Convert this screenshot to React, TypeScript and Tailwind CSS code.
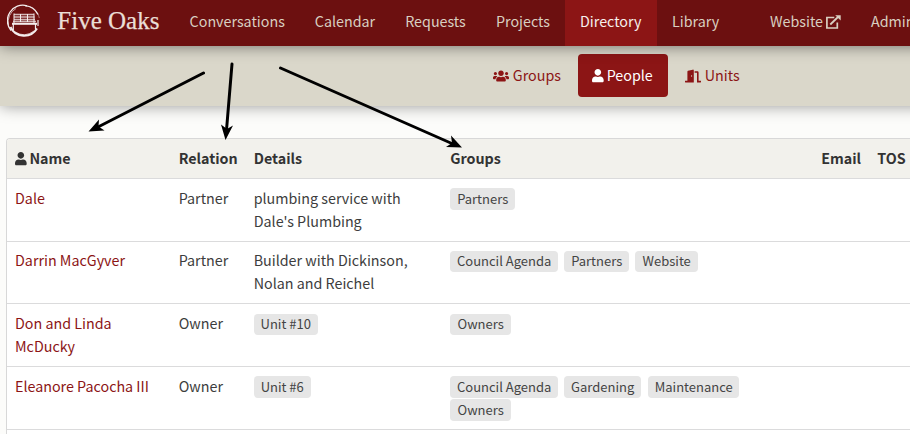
import type { ReactNode } from "react";
import { FaUser, FaUsers, FaDoorOpen } from "react-icons/fa";

function Logo() {
  return (
    <svg width="34" height="34" viewBox="0 0 34 34" fill="none" stroke="#f4eeee">
      <path d="M4 26.500A15.400 15.400 0 0 1 20 1.800" strokeWidth="1.300" />
      <path d="M1.500 21A15.500 15.500 0 0 1 9 4.500" strokeWidth=".8" opacity=".8" />
      <path d="M3.500 23A15 15 0 0 0 30 24.500" strokeWidth="2" />
      <path d="M8 28Q18 34 27 27" strokeWidth="1" opacity=".8" />
      <path d="M18 1.700Q27 2.500 31 10.500" strokeWidth="1.300" />
      <path d="M23 2.500Q31 6 32.300 14" strokeWidth=".6" opacity=".7" />
      <path d="M7 10.500H27M7 13H27.500M7 15.500H28M6 17.500H29" strokeWidth="1.500" opacity=".75" />
      <path d="M7 9.500V19M13.500 10V18M20.500 10V18M27 9.500V19" strokeWidth="1" />
      <path d="M5 19.800H30" strokeWidth="2" />
      <path d="M6.300 20V26M28.500 20V25M31 16V22" strokeWidth="1.200" />
    </svg>
  );
}

function ExternalIcon() {
  return (
    <svg className="ml-[3px] mt-[3px] shrink-0" width="15" height="14" viewBox="0 0 15 14" fill="none" stroke="currentColor">
      <path d="M8.300 2.500H.9V13H11.300V7.500" strokeWidth="1.700" />
      <path d="M4.300 9.500L12 2" strokeWidth="1.800" />
      <path d="M9.200.2H14.700V5.500Z" fill="currentColor" stroke="none" />
    </svg>
  );
}

function NavItem({ children, width, active = false }: { children: ReactNode; width: string; active?: boolean }) {
  return (
    <a className={`h-[46px] shrink-0 pl-[15px] pt-[9px] ${width} ${active ? "bg-[#8c1515] text-[#f6f0ec]" : "text-[#d9cfc0]"}`}>
      <span className="flex items-center leading-[23px]">{children}</span>
    </a>
  );
}

function Tag({ children, width, short = false }: { children: ReactNode; width: string; short?: boolean }) {
  return (
    <span className={`flex items-center justify-center rounded-[4px] bg-[#e6e6e6] text-[13px] leading-[23px] text-[#444] ${short ? "h-[21px] pb-[2px]" : "h-[22px] pb-px"} ${width}`}>
      {children}
    </span>
  );
}

const cols = "grid grid-cols-[163.700px_75px_196.500px_371px_56px_60px] pl-2";

function Row({ height, name, relation, details, groups }: { height: string; name: ReactNode; relation: string; details: ReactNode; groups: ReactNode }) {
  return (
    <div className={`${cols} ${height} border-b border-[#dbdbdc] leading-[23px]`}>
      <div className="text-[#8c1515]">{name}</div>
      <div>{relation}</div>
      <div>{details}</div>
      <div>{groups}</div>
    </div>
  );
}

export default function App() {
  return (
    <div className="h-[434px] w-[910px] overflow-hidden whitespace-nowrap bg-[#fcfcfa] font-['Noto_Sans_CJK_SC',sans-serif] text-[14.3px] text-[#3d3d3d]">
      <div className="relative flex h-[434px] flex-col">
        <header className="relative z-20 flex h-[46px] w-[960px] shrink-0 bg-[#6c1010] shadow-[0_0_15px_rgba(0,0,0,0.5)]">
          <div className="flex w-[174.600px] shrink-0 pl-[7px] pt-1">
            <Logo />
            <span className="ml-[16.300px] pt-[2.400px] font-['Liberation_Serif',serif] text-[25px] leading-[30px] text-[#eadfd6] [-webkit-text-stroke:0.25px]">Five Oaks</span>
          </div>
          <NavItem width="w-[125.200px]">Conversations</NavItem>
          <NavItem width="w-[90.400px]">Calendar</NavItem>
          <NavItem width="w-[90.800px]">Requests</NavItem>
          <NavItem width="w-[84px]">Projects</NavItem>
          <NavItem width="w-[92px]" active>Directory</NavItem>
          <NavItem width="w-[98px]">Library</NavItem>
          <NavItem width="w-[101px]">Website<ExternalIcon /></NavItem>
          <NavItem width="w-[80px]">Admin</NavItem>
        </header>

        <nav className="relative z-10 flex h-[60px] w-[960px] shrink-0 bg-[#dad7ca] pl-[493px] pt-2 leading-[23px] text-[#8c1515] shadow-[0_0_15px_rgba(0,0,0,0.4)]">
          <a className="h-[43px] w-[85px] pt-[9px]"><span className="flex h-[23px] items-center"><FaUsers className="mr-[3.800px] mt-[3px] h-4 w-4" />Groups</span></a>
          <a className="h-[43px] w-[90px] rounded bg-[#8c1515] pl-[14px] pt-[9px] text-white"><span className="flex h-[23px] items-center"><FaUser className="mr-[3px] mt-[3px] h-[13.300px] w-[11.700px]" />People</span></a>
          <a className="h-[43px] pl-[17.300px] pt-[9px]"><span className="flex h-[23px] items-center"><FaDoorOpen className="mr-[3.400px] mt-[3px] h-4 w-4" />Units</span></a>
        </nav>

        <main className="ml-[6px] mt-8 h-[296px] w-[940px] shrink-0 overflow-hidden rounded-tl-[4px] border-l border-t border-[#d8d8d8] bg-white">
          <div className={`${cols} h-10 border-b border-[#dbdbdc] bg-[#f2f1ec] pt-[7px] font-bold leading-[23px] text-[#333]`}>
            <div className="flex h-[23px] items-center"><FaUser className="mr-[2.700px] mt-[3px] h-[13.300px] w-[11.700px]" />Name</div>
            <div>Relation</div>
            <div>Details</div>
            <div>Groups</div>
            <div>Email</div>
            <div>TOS</div>
          </div>
          <Row height="h-[63px] pt-[7px]" name="Dale" relation="Partner" details={<>plumbing service with<br />Dale's Plumbing</>} groups={<div className="pt-[2px]"><Tag width="w-[65px]">Partners</Tag></div>} />
          <Row height="h-[62px] pt-[6px]" name="Darrin MacGyver" relation="Partner" details={<>Builder with Dickinson,<br />Nolan and Reichel</>}
            groups={<div className="flex gap-[6px] pt-[3px]"><Tag short width="w-[108px]">Council Agenda</Tag><Tag short width="w-[65px]">Partners</Tag><Tag short width="w-[63px]">Website</Tag></div>} />
          <Row height="h-[63px] pt-[7px]" name={<>Don and Linda<br />McDucky</>} relation="Owner" details={<div className="pt-[3px]"><Tag short width="w-[64px]">Unit #10</Tag></div>} groups={<div className="pt-[3px]"><Tag short width="w-[61px]">Owners</Tag></div>} />
          <Row height="h-[63px] pt-[7px]" name="Eleanore Pacocha III" relation="Owner" details={<div className="pt-[2px]"><Tag width="w-[57px]">Unit #6</Tag></div>}
            groups={<div className="flex flex-col gap-px pt-[2px]"><div className="flex"><Tag width="w-[108px]">Council Agenda</Tag><Tag width="ml-[6px] w-[77px]">Gardening</Tag><Tag width="ml-[7px] w-[91px]">Maintenance</Tag></div><Tag width="w-[61px]">Owners</Tag></div>} />
        </main>

        <svg className="pointer-events-none absolute left-0 top-0 z-30" width="910" height="434" fill="none" stroke="#000" strokeWidth="3" strokeLinecap="round">
          <path d="M203.500 73L98 127M232 64L226.500 130M280.500 68L453 144" />
          <g fill="#000" stroke="none">
            <path d="M88.500 131.500L99 119.500L98.500 126.500L104.500 130.500Z" />
            <path d="M225.500 140L221 124.500L227 129L233 125.500Z" />
            <path d="M462 147.500L446 147L452 143L451 135.500Z" />
          </g>
        </svg>
      </div>
    </div>
  );
}
